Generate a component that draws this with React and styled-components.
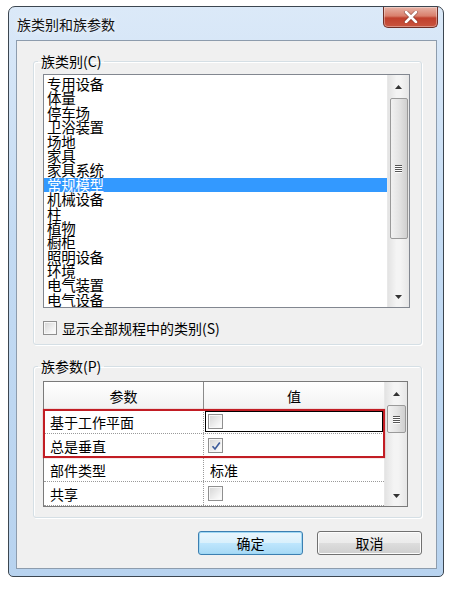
import styled, { createGlobalStyle } from "styled-components";

const GlobalStyle = createGlobalStyle`
  html, body {
    margin: 0;
    padding: 0;
    background: #ffffff;
  }
  body {
    font-family: "Noto Sans CJK SC", "Liberation Sans", sans-serif;
    font-size: 14px;
    color: #000;
  }
`;

const Page = styled.div`
  padding: 6px 15px 12px 8px;
`;

const Window = styled.div`
  width: 436px;
  box-sizing: border-box;
  border: 1px solid #3c4650;
  border-radius: 7px 7px 5px 5px;
  background: linear-gradient(180deg, #dbe9f8 0%, #c4dbf3 40%, #b8d3ef 100%);
  padding: 0 6px 7px 7px;
`;

const TitleBar = styled.div`
  height: 33px;
  display: flex;
  align-items: flex-start;
  justify-content: space-between;
`;

const Title = styled.div`
  margin-top: 9px;
  margin-left: 1px;
  font-size: 14px;
  line-height: 16px;
  color: #111;
  text-shadow: 0 0 6px rgba(255, 255, 255, 0.9);
`;

const CloseButton = styled.div`
  width: 55px;
  height: 21px;
  margin-right: -1px;
  box-sizing: border-box;
  border: 1px solid #6e2e26;
  border-top: none;
  border-radius: 0 0 5px 5px;
  background: linear-gradient(180deg, #e7b3a6 0%, #d97f6c 45%, #c0402d 55%, #c9553f 100%);
  box-shadow: inset 0 0 0 1px rgba(255, 255, 255, 0.35);
  display: flex;
  align-items: center;
  justify-content: center;
`;

const Client = styled.div`
  background: #f0f0f0;
  border: 1px solid #8d9cad;
  padding: 12px 14px 13px 16px;
  display: flex;
  flex-direction: column;
`;

const Group = styled.fieldset`
  margin: 0;
  border: 1px solid #d5dfe5;
  border-radius: 3px;
  box-shadow: inset 1px 1px 0 #fff, 1px 1px 0 #fff;
  padding: ${(p) => p.$pad};
  & + & {
    margin-top: 13px;
  }
`;

const Legend = styled.legend`
  padding: 0 3px;
  margin-left: -5px;
  font-size: 14px;
  line-height: 16px;
`;

const ListBox = styled.div`
  height: 234px;
  box-sizing: border-box;
  border: 1px solid #828790;
  background: #fff;
  display: flex;
`;

const Items = styled.ul`
  list-style: none;
  margin: 0;
  padding: 2px 0 0;
  flex: 1;
  overflow: hidden;
`;

const Item = styled.li`
  height: 14.4px;
  line-height: 14px;
  font-size: 14.5px;
  padding-left: 3px;
  letter-spacing: -0.3px;
  white-space: nowrap;
  background: ${(p) => (p.$selected ? "#3399ff" : "transparent")};
  color: ${(p) => (p.$selected ? "#fff" : "#000")};
`;

const ScrollBar = styled.div`
  width: ${(p) => p.$width}px;
  background: linear-gradient(90deg, #e3e3e3, #f4f4f4 40%, #f4f4f4 60%, #e6e6e6);
  border-left: 1px solid #e8e8e8;
  display: flex;
  flex-direction: column;
  align-items: center;
`;

const Arrow = styled.div`
  height: ${(p) => p.$h}px;
  width: 100%;
  display: flex;
  align-items: center;
  justify-content: center;
  color: #333;
`;

const Spacer = styled.div`
  flex: 1;
`;

const Thumb = styled.div`
  width: calc(100% - 3px);
  height: ${(p) => p.$h}px;
  box-sizing: border-box;
  border: 1px solid #9a9a9a;
  border-radius: 2px;
  background: linear-gradient(90deg, #f2f2f2, #e4e4e4 50%, #cfcfcf);
  display: flex;
  align-items: center;
  justify-content: center;
`;

const Grip = styled.div`
  width: 7px;
  display: flex;
  flex-direction: column;
  gap: 1px;
  span {
    display: block;
    height: 1px;
    background: #555;
    box-shadow: 0 1px 0 #fff;
  }
`;

const CheckRow = styled.label`
  display: flex;
  align-items: center;
  gap: 5px;
  margin-top: 12px;
  font-size: 14px;
  line-height: 16px;
`;

const Box = styled.span`
  width: ${(p) => p.$size}px;
  height: ${(p) => p.$size}px;
  box-sizing: border-box;
  border: 1px solid #8f8f8f;
  background: linear-gradient(135deg, #d4d4d4, #f4f4f4 70%, #fff);
  box-shadow: inset 0 0 0 1px #f7f7f7;
  display: inline-flex;
  align-items: center;
  justify-content: center;
  flex-shrink: 0;
`;

const Table = styled.div`
  height: 126px;
  box-sizing: border-box;
  border: 1px solid #7a7a7a;
  background: #fff;
  display: flex;
`;

const TableBody = styled.div`
  flex: 1;
  display: flex;
  flex-direction: column;
`;

const Row = styled.div`
  display: grid;
  grid-template-columns: 160px 1fr;
  height: ${(p) => p.$h}px;
  border-bottom: 1px ${(p) => (p.$head ? "solid #8a8a8a" : "dotted #9a9a9a")};
  background: ${(p) => (p.$head ? "linear-gradient(180deg, #ffffff, #f1f1f1)" : "#fff")};
  box-sizing: border-box;
`;

const Cell = styled.div`
  display: flex;
  align-items: center;
  justify-content: ${(p) => (p.$center ? "center" : "flex-start")};
  padding-left: ${(p) => (p.$center ? 0 : p.$pl)}px;
  font-size: 14px;
  line-height: 16px;
  border-right: ${(p) => (p.$divider ? (p.$head ? "1px solid #8a8a8a" : "1px dotted #9a9a9a") : "none")};
  box-sizing: border-box;
  outline: ${(p) => (p.$focus ? "1px solid #000" : "none")};
  outline-offset: -2px;
`;

const Highlight = styled.div`
  position: relative;
  &::after {
    content: "";
    position: absolute;
    inset: -1px -1px 0 -1px;
    border: 2px solid #c21d24;
    box-shadow: 0 0 1px rgba(194, 29, 36, 0.6);
    pointer-events: none;
  }
`;

const Buttons = styled.div`
  display: flex;
  justify-content: flex-end;
  gap: 14px;
  margin-top: 13px;
`;

const Button = styled.button`
  width: 105px;
  height: 24px;
  border-radius: 3px;
  font-family: inherit;
  font-size: 14px;
  line-height: 16px;
  padding: 0;
  color: #000;
  border: 1px solid ${(p) => (p.$primary ? "#3c7fb1" : "#707070")};
  background: ${(p) =>
    p.$primary
      ? "linear-gradient(180deg, #eaf6fd 0%, #d9f0fc 50%, #bee6fd 51%, #a7d9f5 100%)"
      : "linear-gradient(180deg, #f2f2f2 0%, #ebebeb 50%, #dddddd 51%, #cfcfcf 100%)"};
  box-shadow: inset 0 0 0 1px ${(p) => (p.$primary ? "#a0d8f4" : "#fcfcfc")};
`;

const categories = [
  "专用设备",
  "体量",
  "停车场",
  "卫浴装置",
  "场地",
  "家具",
  "家具系统",
  "常规模型",
  "机械设备",
  "柱",
  "植物",
  "橱柜",
  "照明设备",
  "环境",
  "电气装置",
  "电气设备",
];

const UpArrow = () => (
  <svg width="7" height="4" viewBox="0 0 7 4">
    <path d="M0 4 L3.5 0 L7 4 Z" fill="#333" />
  </svg>
);

const DownArrow = () => (
  <svg width="7" height="4" viewBox="0 0 7 4">
    <path d="M0 0 L3.5 4 L7 0 Z" fill="#333" />
  </svg>
);

function Scroll({ width, thumbTop, thumbHeight }) {
  return (
    <ScrollBar $width={width}>
      <Arrow $h={thumbTop}>
        <UpArrow />
      </Arrow>
      <Thumb $h={thumbHeight}>
        <Grip>
          <span />
          <span />
          <span />
          <span />
        </Grip>
      </Thumb>
      <Spacer />
      <Arrow $h={20}>
        <DownArrow />
      </Arrow>
    </ScrollBar>
  );
}

function CheckBox({ checked, size = 14 }) {
  return (
    <Box $size={size}>
      {checked && (
        <svg width="10" height="10" viewBox="0 0 10 10">
          <path d="M1.5 5.2 L4 8 L8.8 1.5" fill="none" stroke="#3b5a9a" strokeWidth="1.6" />
        </svg>
      )}
    </Box>
  );
}

function ParamRow({ name, value, focus }) {
  const isBox = value === "check" || value === "checked";
  return (
    <Row $h={24}>
      <Cell $pl={6} $divider>
        {name}
      </Cell>
      <Cell $pl={isBox ? 4 : 6} $focus={focus}>
        {isBox ? <CheckBox size={15} checked={value === "checked"} /> : value}
      </Cell>
    </Row>
  );
}

export default function App() {
  return (
    <Page>
      <GlobalStyle />
      <Window>
        <TitleBar>
          <Title>族类别和族参数</Title>
          <CloseButton>
            <svg width="16" height="12" viewBox="0 0 16 12">
              <path
                d="M3 1 L13 11 M13 1 L3 11"
                stroke="#5a2a22"
                strokeWidth="4"
                strokeLinecap="round"
                opacity="0.5"
              />
              <path d="M3 1 L13 11 M13 1 L3 11" stroke="#fff" strokeWidth="2.6" strokeLinecap="round" />
            </svg>
          </CloseButton>
        </TitleBar>
        <Client>
          <Group $pad="5px 11px 8px 9px">
            <Legend>族类别(C)</Legend>
            <ListBox>
              <Items>
                {categories.map((c, i) => (
                  <Item key={c} $selected={i === 7}>
                    {c}
                  </Item>
                ))}
              </Items>
              <Scroll width={21} thumbTop={23} thumbHeight={141} />
            </ListBox>
            <CheckRow>
              <CheckBox />
              显示全部规程中的类别(S)
            </CheckRow>
          </Group>
          <Group $pad="7px 13px 10px 9px">
            <Legend>族参数(P)</Legend>
            <Table>
              <TableBody>
                <Row $h={28} $head>
                  <Cell $center $divider $head>
                    参数
                  </Cell>
                  <Cell $center>值</Cell>
                </Row>
                <Highlight>
                  <ParamRow name="基于工作平面" value="check" focus />
                  <ParamRow name="总是垂直" value="checked" />
                </Highlight>
                <ParamRow name="部件类型" value="标准" />
                <ParamRow name="共享" value="check" />
              </TableBody>
              <Scroll width={22} thumbTop={23} thumbHeight={28} />
            </Table>
          </Group>
          <Buttons>
            <Button $primary>确定</Button>
            <Button>取消</Button>
          </Buttons>
        </Client>
      </Window>
    </Page>
  );
}
